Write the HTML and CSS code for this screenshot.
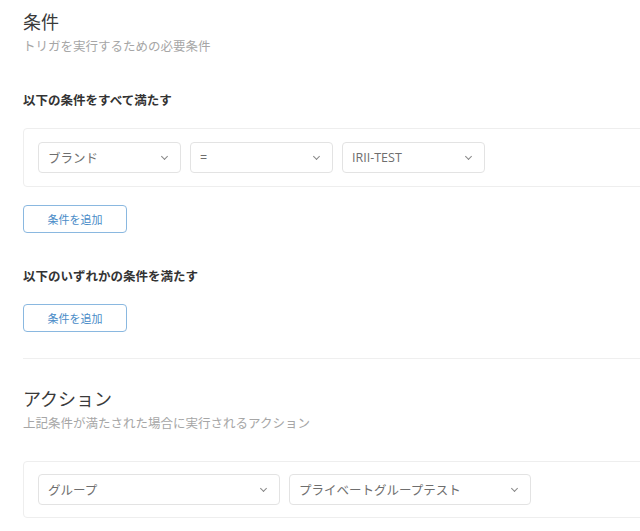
FILE: index.html
```html
<!DOCTYPE html>
<html>
  <head>
    <title>トリガ設定</title>
    <link rel="stylesheet" href="styles.css">
  </head>
  <body>
    <div class="page">

      <section class="block">
        <h2 class="title">条件</h2>
        <p class="subtitle">トリガを実行するための必要条件</p>

        <h3 class="group-label">以下の条件をすべて満たす</h3>
        <div class="panel">
          <div class="select">ブランド<span class="caret"></span></div>
          <div class="select">=<span class="caret"></span></div>
          <div class="select">IRII-TEST<span class="caret"></span></div>
        </div>
        <button class="add">条件を追加</button>

        <h3 class="group-label any">以下のいずれかの条件を満たす</h3>
        <button class="add">条件を追加</button>
      </section>

      <hr class="divider">

      <section class="block">
        <h2 class="title">アクション</h2>
        <p class="subtitle">上記条件が満たされた場合に実行されるアクション</p>

        <div class="panel action">
          <div class="select wide">グループ<span class="caret"></span></div>
          <div class="select wide">プライベートグループテスト<span class="caret"></span></div>
        </div>
      </section>

    </div>
  </body>
</html>
```

FILE: styles.css
```css
*,
*:before,
*:after {
  box-sizing: border-box;
}

html,
body {
  margin: 0;
  padding: 0;
  background: #fff;
  overflow: hidden;
  font-family: "Open Sans", "Noto Sans CJK JP", sans-serif;
  color: #333;
}

.page {
  width: 720px;
  padding: 8px 0 0 23px;
}

.title {
  margin: 0;
  font-size: 18px;
  font-weight: normal;
  line-height: 28px;
  color: #3a3a3a;
}

.subtitle {
  margin: 1px 0 0;
  font-size: 12.5px;
  line-height: 20px;
  color: #a6a6a6;
}

.group-label {
  margin: 34px 0 0;
  font-size: 12.5px;
  font-weight: bold;
  line-height: 20px;
  color: #333;
}

.panel {
  display: flex;
  gap: 9px;
  margin-top: 17px;
  padding: 13px 14px;
  border: 1px solid #eee;
  border-radius: 4px;
}

.select {
  display: flex;
  align-items: center;
  justify-content: space-between;
  width: 143px;
  height: 31px;
  padding: 0 13px 0 9px;
  border: 1px solid #e3e3e3;
  border-radius: 4px;
  font-size: 12.5px;
  color: #6e6e6e;
}

.select.wide {
  width: 242px;
}

.caret {
  width: 5px;
  height: 5px;
  margin-top: -3px;
  border-right: 1px solid #888;
  border-bottom: 1px solid #888;
  transform: rotate(45deg);
}

.add {
  display: block;
  width: 104px;
  height: 28px;
  margin-top: 18px;
  padding: 0;
  background: #fff;
  border: 1px solid #8ab8e0;
  border-radius: 4px;
  font-family: inherit;
  font-size: 11px;
  color: #4a8cc8;
}

.group-label.any + .add {
  margin-top: 17px;
}

.divider {
  margin: 26px 0 0;
  border: 0;
  border-top: 1px solid #efefef;
}

.block + .divider + .block {
  padding-top: 26px;
}

.action {
  margin-top: 27px;
  padding: 12px 14px;
}
```
